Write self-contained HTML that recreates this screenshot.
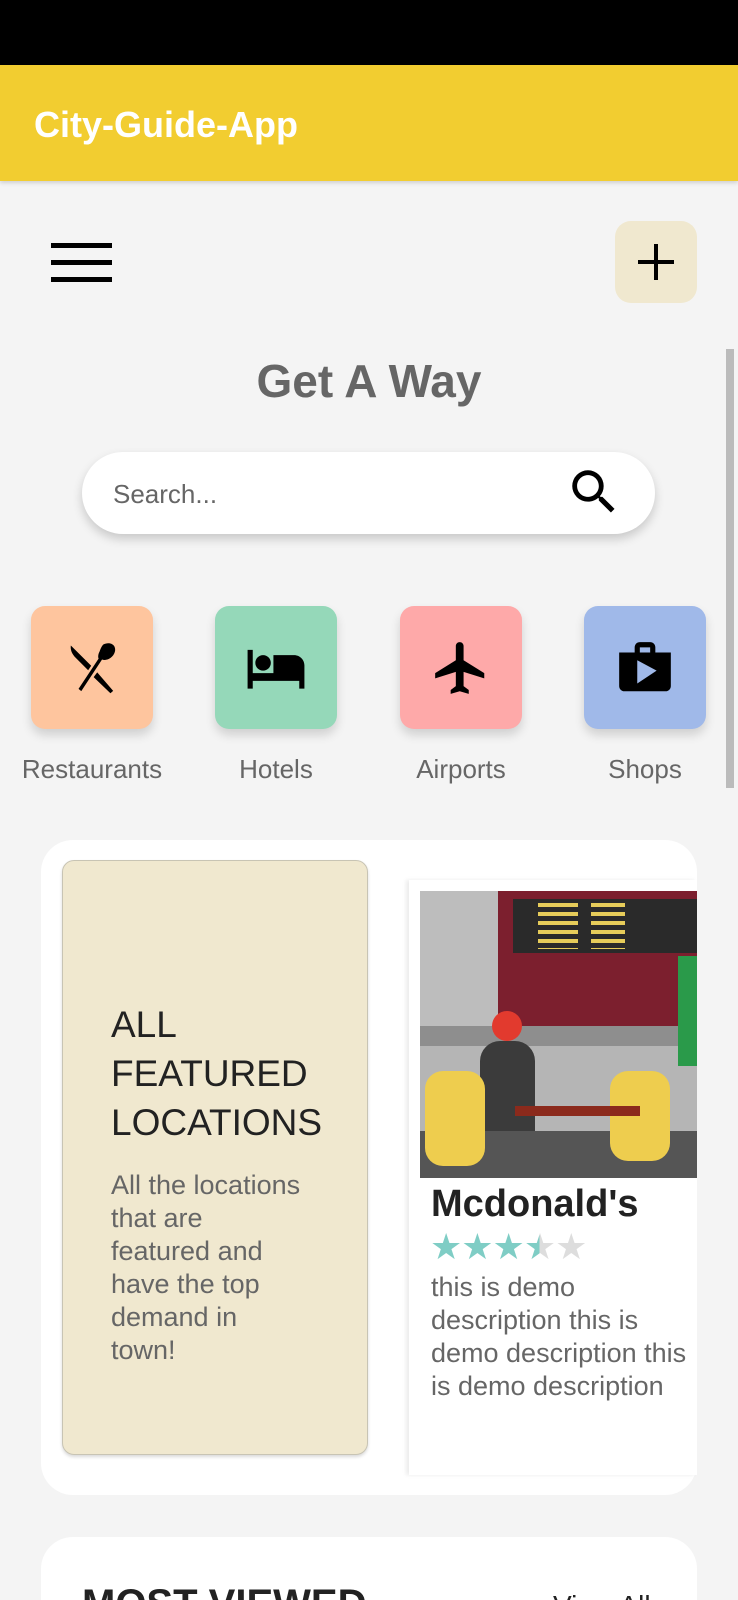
<!DOCTYPE html>
<html><head><meta charset="utf-8"><style>
*{margin:0;padding:0;box-sizing:border-box}
html,body{width:738px;height:1600px;overflow:hidden}
body{background:#f4f4f4;font-family:"Liberation Sans",Roboto,sans-serif;position:relative}
.a{position:absolute}
.cat{position:absolute;top:606px;width:122px;height:123px;border-radius:14px;box-shadow:0 6px 10px rgba(0,0,0,.15);display:flex;align-items:center;justify-content:center}
.lbl{position:absolute;top:754px;width:180px;text-align:center;font-size:26px;color:#666}
.dl{font-size:27px;color:#666;line-height:33px}
</style></head><body>
<div class="a" style="left:0;top:0;width:738px;height:65px;background:#000"></div>
<div class="a" style="left:0;top:65px;width:738px;height:116px;background:#F2CD30;box-shadow:0 2px 4px rgba(0,0,0,.15)"></div>
<div class="a" style="left:34px;top:104px;font-size:36px;color:#fff;font-weight:bold">City-Guide-App</div>

<div class="a" style="left:51px;top:243px;width:61px;height:5px;background:#000"></div>
<div class="a" style="left:51px;top:260px;width:61px;height:5px;background:#000"></div>
<div class="a" style="left:51px;top:277px;width:61px;height:5px;background:#000"></div>

<div class="a" style="left:615px;top:221px;width:82px;height:82px;border-radius:16px;background:#F0E8CF"></div>
<div class="a" style="left:638px;top:260px;width:36px;height:4px;background:#000"></div>
<div class="a" style="left:654px;top:244px;width:4px;height:36px;background:#000"></div>

<div class="a" style="left:0;top:354px;width:738px;text-align:center;font-size:46px;font-weight:bold;color:#666">Get A Way</div>

<div class="a" style="left:82px;top:452px;width:573px;height:82px;border-radius:41px;background:#fff;box-shadow:0 5px 10px rgba(0,0,0,.18)"></div>
<div class="a" style="left:113px;top:479px;font-size:26px;color:#666">Search...</div>
<svg class="a" style="left:565px;top:463px" width="58" height="58" viewBox="0 0 24 24"><path d="M15.5 14h-.79l-.28-.27A6.47 6.47 0 0016 9.5 6.5 6.5 0 109.5 16c1.61 0 3.09-.59 4.23-1.57l.27.28v.79l5 4.99L20.49 19l-4.99-5zm-6 0C7.01 14 5 11.99 5 9.5S7.01 5 9.5 5 14 7.01 14 9.5 11.99 14 9.5 14z"/></svg>

<div class="cat" style="left:31px;background:#FEC59E"><svg width="66" height="66" viewBox="0 0 24 24"><path d="M16.05 3.5c1.7-.9 3.6-.5 4.2.9.6 1.5-.4 3.4-2.1 4.3-.9.4-1.8.5-2.5.2L8.1 20.4l-1-.8 7.3-11c-.3-.8-.1-1.8.4-2.7.3-.9.8-1.9 1.25-2.4zM4.3 3.8l7.4 7.4-1.1 1.6L6.1 8.3c-1.5-1.5-2-3-1.8-4.5zm9.6 9.8l5.8 6.7-1 .9-6.1-5.9z"/></svg></div>
<div class="cat" style="left:215px;background:#95D8B9"><svg width="62" height="62" viewBox="0 0 24 24"><path d="M7 13c1.66 0 3-1.34 3-3S8.66 7 7 7s-3 1.340-3 3 1.34 3 3 3zm12-6h-8v7H3V5H1v15h2v-3h18v3h2v-9c0-2.21-1.79-4-4-4z"/></svg></div>
<div class="cat" style="left:400px;background:#FEA9A9"><svg width="62" height="62" viewBox="0 0 24 24"><path d="M21 16v-2l-8-5V3.5c0-.83-.67-1.5-1.5-1.5S10 2.67 10 3.5V9l-8 5v2l8-2.5V19l-2 1.5V22l3.5-1 3.5 1v-1.5L13 19v-5.5l8 2.5z"/></svg></div>
<div class="cat" style="left:584px;background:#A0B9E9"><svg width="62" height="62" viewBox="0 0 24 24"><path d="M16 6V4c0-1.11-.89-2-2-2h-4c-1.11 0-2 .89-2 2v2H2v13c0 1.11.89 2 2 2h16c1.11 0 2-.89 2-2V6h-6zm-6-2h4v2h-4V4zM9 18V9l7.5 4L9 18z"/></svg></div>
<div class="lbl" style="left:2px">Restaurants</div>
<div class="lbl" style="left:186px">Hotels</div>
<div class="lbl" style="left:371px">Airports</div>
<div class="lbl" style="left:555px">Shops</div>

<div class="a" style="left:726px;top:349px;width:8px;height:439px;background:#bbb"></div>

<div class="a" style="left:41px;top:840px;width:656px;height:655px;border-radius:32px;background:#fff"></div>
<div class="a" style="left:62px;top:860px;width:306px;height:595px;border-radius:12px;background:#F0E8CF;border:1.5px solid #c8c4b4;box-shadow:0 2px 3px rgba(0,0,0,.15)"></div>
<div class="a" style="left:111px;top:1000px;font-size:37px;color:#222;line-height:49px">ALL<br>FEATURED<br>LOCATIONS</div>
<div class="a dl" style="left:111px;top:1169px">All the locations<br>that are<br>featured and<br>have the top<br>demand in<br>town!</div>

<div class="a" style="left:409px;top:880px;width:288px;height:595px;background:#fff;box-shadow:-3px 0 4px rgba(0,0,0,.08);overflow:hidden">
 <div class="a" style="left:11px;top:11px;width:277px;height:287px;background:#c9c9c9;overflow:hidden">
  <div class="a" style="left:0;top:0;width:80px;height:200px;background:#bdbdbd"></div>
  <div class="a" style="left:78px;top:0;width:210px;height:135px;background:#7c1f2e"></div>
  <div class="a" style="left:93px;top:8px;width:188px;height:54px;background:#2a2a2a"></div>
  <div class="a" style="left:118px;top:12px;width:40px;height:46px;background:repeating-linear-gradient(#e6cc5a 0 4px,#2a2a2a 4px 9px)"></div>
  <div class="a" style="left:171px;top:12px;width:34px;height:46px;background:repeating-linear-gradient(#e6cc5a 0 4px,#2a2a2a 4px 9px)"></div>
  <div class="a" style="left:0;top:135px;width:277px;height:20px;background:#8e8e8e"></div>
  <div class="a" style="left:0;top:155px;width:277px;height:130px;background:#b5b5b5"></div>
  <div class="a" style="left:0;top:240px;width:277px;height:47px;background:#555"></div>
  <div class="a" style="left:72px;top:120px;width:30px;height:30px;border-radius:50%;background:#e23a2e"></div>
  <div class="a" style="left:60px;top:150px;width:55px;height:90px;border-radius:20px 20px 0 0;background:#3b3b3b"></div>
  <div class="a" style="left:5px;top:180px;width:60px;height:95px;border-radius:18px;background:#eecd4e"></div>
  <div class="a" style="left:190px;top:180px;width:60px;height:90px;border-radius:18px;background:#eecd4e"></div>
  <div class="a" style="left:95px;top:215px;width:125px;height:10px;background:#8b2a1c"></div>
  <div class="a" style="left:258px;top:65px;width:20px;height:110px;background:#2a9a4a"></div>
 </div>
 <div class="a" style="left:22px;top:303px;font-size:38px;font-weight:bold;color:#222">Mcdonald's</div>
 <div class="a" style="left:21px;top:346px;font-size:36px;letter-spacing:-1px;color:#7FCDC5">★★★<span style="background:linear-gradient(90deg,#7FCDC5 50%,#ddd 50%);-webkit-background-clip:text;color:transparent">★</span><span style="color:#ddd">★</span></div>
 <div class="a dl" style="left:22px;top:391px;white-space:nowrap">this is demo<br>description this is<br>demo description this<br>is demo description</div>
</div>

<div class="a" style="left:41px;top:1537px;width:656px;height:63px;border-radius:32px 32px 0 0;background:#fff;overflow:hidden">
 <div class="a" style="left:41px;top:45px;font-size:40px;font-weight:bold;color:#222">MOST VIEWED</div>
 <div class="a" style="left:512px;top:53px;font-size:28px;color:#222">View All</div>
</div>
</body></html>
